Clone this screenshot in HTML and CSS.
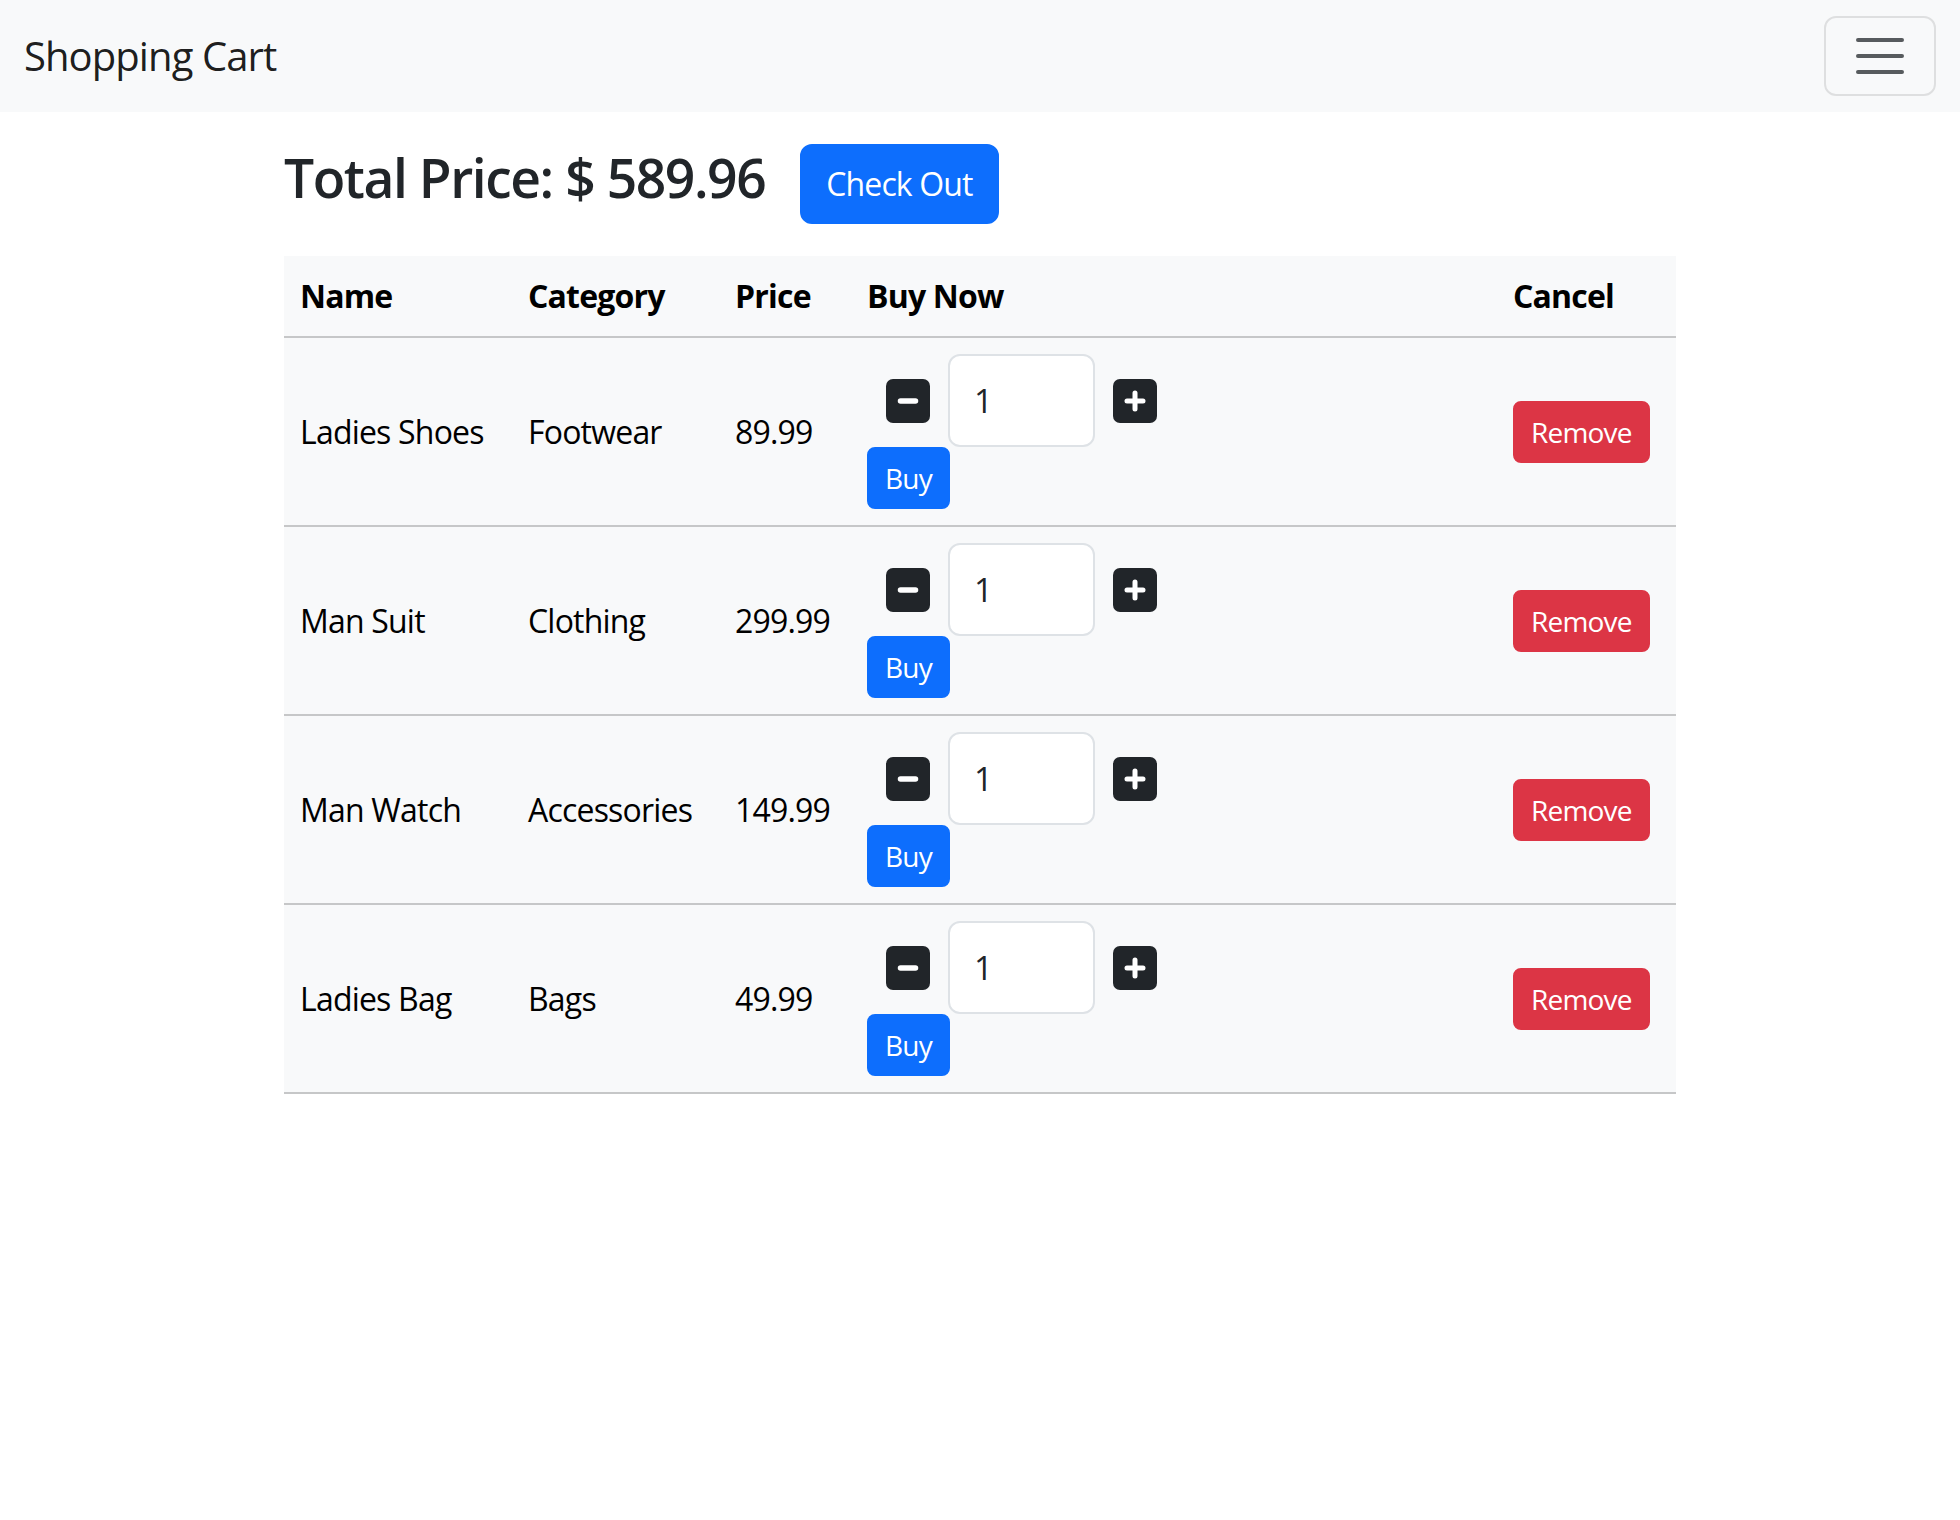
FILE: index.html
```html
<!DOCTYPE html>
<html lang="en">
<head>
<meta charset="utf-8">
<title>Shopping Cart</title>
<link rel="stylesheet" href="styles.css">
</head>
<body>
<nav class="navbar">
  <span class="brand">Shopping Cart</span>
  <button class="toggler" aria-label="Toggle navigation">
    <svg class="toggler-icon" viewBox="0 0 30 30" width="60" height="60"><path d="M4 7h22M4 15h22M4 23h22" stroke="rgba(33,37,41,0.75)" stroke-width="2" stroke-linecap="round" fill="none"/></svg>
  </button>
</nav>
<main class="container">
  <div class="summary">
    <h3 class="total">Total Price: $ 589.96</h3>
    <button class="btn btn-primary btn-checkout">Check Out</button>
  </div>
  <table class="cart">
    <colgroup>
      <col class="c-name"><col class="c-cat"><col class="c-price"><col class="c-buy"><col class="c-cancel">
    </colgroup>
    <thead>
      <tr><th>Name</th><th>Category</th><th>Price</th><th>Buy Now</th><th>Cancel</th></tr>
    </thead>
    <tbody>
      <tr>
        <td>Ladies Shoes</td><td>Footwear</td><td>89.99</td>
        <td>
          <div class="qty">
            <button class="btn-icon"><svg viewBox="0 0 44 44" width="44" height="44"><path d="M14.5 22H29.5" stroke="#fff" stroke-width="5.5" stroke-linecap="round"/></svg></button>
            <input class="qty-input" type="text" value="1">
            <button class="btn-icon"><svg viewBox="0 0 44 44" width="44" height="44"><path d="M14 22H30M22 14V30" stroke="#fff" stroke-width="5" stroke-linecap="round"/></svg></button>
          </div>
          <button class="btn btn-primary btn-sm">Buy</button>
        </td>
        <td><button class="btn btn-danger btn-sm">Remove</button></td>
      </tr>
      <tr>
        <td>Man Suit</td><td>Clothing</td><td>299.99</td>
        <td>
          <div class="qty">
            <button class="btn-icon"><svg viewBox="0 0 44 44" width="44" height="44"><path d="M14.5 22H29.5" stroke="#fff" stroke-width="5.5" stroke-linecap="round"/></svg></button>
            <input class="qty-input" type="text" value="1">
            <button class="btn-icon"><svg viewBox="0 0 44 44" width="44" height="44"><path d="M14 22H30M22 14V30" stroke="#fff" stroke-width="5" stroke-linecap="round"/></svg></button>
          </div>
          <button class="btn btn-primary btn-sm">Buy</button>
        </td>
        <td><button class="btn btn-danger btn-sm">Remove</button></td>
      </tr>
      <tr>
        <td>Man Watch</td><td>Accessories</td><td>149.99</td>
        <td>
          <div class="qty">
            <button class="btn-icon"><svg viewBox="0 0 44 44" width="44" height="44"><path d="M14.5 22H29.5" stroke="#fff" stroke-width="5.5" stroke-linecap="round"/></svg></button>
            <input class="qty-input" type="text" value="1">
            <button class="btn-icon"><svg viewBox="0 0 44 44" width="44" height="44"><path d="M14 22H30M22 14V30" stroke="#fff" stroke-width="5" stroke-linecap="round"/></svg></button>
          </div>
          <button class="btn btn-primary btn-sm">Buy</button>
        </td>
        <td><button class="btn btn-danger btn-sm">Remove</button></td>
      </tr>
      <tr>
        <td>Ladies Bag</td><td>Bags</td><td>49.99</td>
        <td>
          <div class="qty">
            <button class="btn-icon"><svg viewBox="0 0 44 44" width="44" height="44"><path d="M14.5 22H29.5" stroke="#fff" stroke-width="5.5" stroke-linecap="round"/></svg></button>
            <input class="qty-input" type="text" value="1">
            <button class="btn-icon"><svg viewBox="0 0 44 44" width="44" height="44"><path d="M14 22H30M22 14V30" stroke="#fff" stroke-width="5" stroke-linecap="round"/></svg></button>
          </div>
          <button class="btn btn-primary btn-sm">Buy</button>
        </td>
        <td><button class="btn btn-danger btn-sm">Remove</button></td>
      </tr>
    </tbody>
  </table>
</main>
</body>
</html>
```
FILE: styles.css
```css
* { box-sizing: border-box; }

body {
  margin: 0;
  font-family: "Open Sans", "Noto Sans", sans-serif;
  font-size: 32px;
  line-height: 1.5;
  color: #212529;
  background: #fff;
  letter-spacing: -0.025em;
}

.navbar {
  display: flex;
  align-items: center;
  justify-content: space-between;
  height: 112px;
  padding: 16px 24px;
  background: #f8f9fa;
}

.brand {
  font-size: 40px;
  line-height: 60px;
  padding: 10px 0;
  color: rgba(0, 0, 0, 0.9);
  letter-spacing: -0.023em;
}

.toggler {
  display: flex;
  align-items: center;
  justify-content: center;
  width: 112px;
  height: 80px;
  padding: 8px 24px;
  background: transparent;
  border: 2px solid rgba(0, 0, 0, 0.1);
  border-radius: 12px;
}

.toggler-icon { display: block; flex: none; }

.container {
  width: 1440px;
  margin: 0 auto;
  padding: 0 24px;
}

.summary {
  display: flex;
  align-items: flex-start;
  gap: 35px;
  margin-top: 32px;
}

.total {
  margin: 2px 0 0;
  font-size: 53.36px;
  line-height: 64px;
  font-weight: 600;
  letter-spacing: -0.027em;
  color: #212529;
}

.btn {
  display: inline-block;
  font-family: inherit;
  letter-spacing: inherit;
  font-size: 32px;
  line-height: 48px;
  padding: 12px 24px;
  border: 2px solid transparent;
  border-radius: 12px;
  color: #fff;
  cursor: pointer;
}

.btn-checkout {
  padding: 14px 24px;
  font-size: 32px;
  letter-spacing: -0.027em;
}

.btn-primary { background: #0d6efd; border-color: #0d6efd; }
.btn-danger { background: #dc3545; border-color: #dc3545; }

.btn-sm {
  font-size: 28px;
  line-height: 42px;
  padding: 8px 16px;
  border-radius: 8px;
}

.cart {
  width: 1392px;
  margin-top: 32px;
  border-collapse: collapse;
  table-layout: fixed;
  color: #000;
}

.c-name { width: 228px; }
.c-cat { width: 207px; }
.c-price { width: 132px; }
.c-buy { width: 646px; }
.c-cancel { width: 179px; }

.cart th,
.cart td {
  background: #f8f9fa;
  padding: 16px;
  border-bottom: 2px solid #c6c7c8;
  text-align: left;
  vertical-align: middle;
  line-height: 48px;
}

.cart th { font-weight: 700; }

.qty {
  display: flex;
  align-items: center;
  gap: 18px;
  margin-left: 19px;
}

.btn-icon {
  display: flex;
  width: 44px;
  height: 44px;
  padding: 0;
  border: none;
  border-radius: 7px;
  background: #212529;
  flex: none;
}

.btn-icon svg { display: block; }

.qty-input {
  width: 147px;
  height: 93px;
  padding: 0 24px;
  font-family: inherit;
  font-size: 33px;
  color: #212529;
  background: #fff;
  border: 2px solid #dee2e6;
  border-radius: 12px;
  outline: none;
}

.cart .btn-sm { display: block; }
```
